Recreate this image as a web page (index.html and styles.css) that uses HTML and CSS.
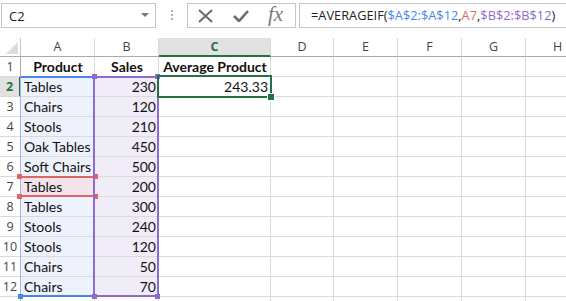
FILE: index.html
```html
<!DOCTYPE html>
<html lang="en">
<head>
  <meta charset="UTF-8">
  <title>AVERAGEIF</title>
  <link rel="stylesheet" href="styles.css">
</head>
<body>

  <div class="formula-bar">
    <div class="name-box">
      <span>C2</span>
      <span class="caret"></span>
    </div>
    <div class="grip"><i></i><i></i><i></i></div>
    <div class="fx-buttons">
      <svg class="icon-x" width="15" height="14" viewBox="0 0 15 14">
        <path d="M1 1 L14 13 M14 1 L1 13" stroke="#6b6b6b" stroke-width="2" fill="none"/>
      </svg>
      <svg class="icon-check" width="16" height="12" viewBox="0 0 16 12">
        <path d="M1 6 L6 11 L15 1" stroke="#6b6b6b" stroke-width="2.6" fill="none"/>
      </svg>
      <span class="fx">fx</span>
    </div>
    <div class="formula-input">=AVERAGEIF(<span class="ref-a">$A$2:$A$12</span>,<span class="ref-r">A7</span>,<span class="ref-b">$B$2:$B$12</span>)</div>
  </div>

  <div class="sheet-wrap">
    <div class="sheet">
      <div class="corner"></div>
      <div class="col-head">A</div><div class="col-head">B</div><div class="col-head active">C</div><div class="col-head">D</div><div class="col-head">E</div><div class="col-head">F</div><div class="col-head">G</div><div class="col-head">H</div>

      <div class="row-head">1</div>
      <div class="cell bold center">Product</div><div class="cell bold center">Sales</div><div class="cell bold center">Average Product</div><div class="cell"></div><div class="cell"></div><div class="cell"></div><div class="cell"></div><div class="cell"></div>

      <div class="row-head active">2</div>
      <div class="cell in-a">Tables</div><div class="cell in-b num">230</div><div class="cell num">243.33</div><div class="cell"></div><div class="cell"></div><div class="cell"></div><div class="cell"></div><div class="cell"></div>

      <div class="row-head">3</div>
      <div class="cell in-a">Chairs</div><div class="cell in-b num">120</div><div class="cell"></div><div class="cell"></div><div class="cell"></div><div class="cell"></div><div class="cell"></div><div class="cell"></div>

      <div class="row-head">4</div>
      <div class="cell in-a">Stools</div><div class="cell in-b num">210</div><div class="cell"></div><div class="cell"></div><div class="cell"></div><div class="cell"></div><div class="cell"></div><div class="cell"></div>

      <div class="row-head">5</div>
      <div class="cell in-a">Oak Tables</div><div class="cell in-b num">450</div><div class="cell"></div><div class="cell"></div><div class="cell"></div><div class="cell"></div><div class="cell"></div><div class="cell"></div>

      <div class="row-head">6</div>
      <div class="cell in-a">Soft Chairs</div><div class="cell in-b num">500</div><div class="cell"></div><div class="cell"></div><div class="cell"></div><div class="cell"></div><div class="cell"></div><div class="cell"></div>

      <div class="row-head">7</div>
      <div class="cell in-r">Tables</div><div class="cell in-b num">200</div><div class="cell"></div><div class="cell"></div><div class="cell"></div><div class="cell"></div><div class="cell"></div><div class="cell"></div>

      <div class="row-head">8</div>
      <div class="cell in-a">Tables</div><div class="cell in-b num">300</div><div class="cell"></div><div class="cell"></div><div class="cell"></div><div class="cell"></div><div class="cell"></div><div class="cell"></div>

      <div class="row-head">9</div>
      <div class="cell in-a">Stools</div><div class="cell in-b num">240</div><div class="cell"></div><div class="cell"></div><div class="cell"></div><div class="cell"></div><div class="cell"></div><div class="cell"></div>

      <div class="row-head">10</div>
      <div class="cell in-a">Stools</div><div class="cell in-b num">120</div><div class="cell"></div><div class="cell"></div><div class="cell"></div><div class="cell"></div><div class="cell"></div><div class="cell"></div>

      <div class="row-head">11</div>
      <div class="cell in-a">Chairs</div><div class="cell in-b num">50</div><div class="cell"></div><div class="cell"></div><div class="cell"></div><div class="cell"></div><div class="cell"></div><div class="cell"></div>

      <div class="row-head">12</div>
      <div class="cell in-a">Chairs</div><div class="cell in-b num">70</div><div class="cell"></div><div class="cell"></div><div class="cell"></div><div class="cell"></div><div class="cell"></div><div class="cell"></div>

      <div class="row-head"></div>
      <div class="cell"></div><div class="cell"></div><div class="cell"></div><div class="cell"></div><div class="cell"></div><div class="cell"></div><div class="cell"></div><div class="cell"></div>
    </div>

    <!-- range highlights drawn over the grid -->
    <div class="range range-a"><b class="sq tl"></b><b class="sq bl"></b></div>
    <div class="range range-r"><b class="sq tl"></b><b class="sq tr"></b><b class="sq bl"></b><b class="sq br"></b></div>
    <div class="range range-b"><b class="sq tl"></b><b class="sq tr"></b><b class="sq bl"></b><b class="sq br"></b></div>
    <div class="selection"><b class="handle"></b></div>
  </div>

</body>
</html>
```

FILE: styles.css
```css
body {
  margin: 0;
  background: #fff;
  font-family: Lato, "Liberation Sans", sans-serif;
  overflow: hidden;
  width: 566px;
  height: 301px;
}

/* formula bar */
.formula-bar {
  display: flex;
  align-items: flex-start;
  height: 38px;
  padding: 3px 0 0 1px;
  box-sizing: border-box;
}

.name-box {
  width: 155px;
  height: 25px;
  box-sizing: border-box;
  border: 1px solid #c6c6c6;
  display: flex;
  align-items: center;
  justify-content: space-between;
  padding: 0 6px 0 7px;
  font-family: "Open Sans", sans-serif;
  font-size: 13px;
  color: #222;
}

.caret {
  width: 0;
  height: 0;
  border-left: 4px solid transparent;
  border-right: 4px solid transparent;
  border-top: 4px solid #777;
  margin-top: -2px;
}

.grip {
  width: 31px;
  display: flex;
  flex-direction: column;
  align-items: center;
  gap: 2px;
  padding-top: 7px;
}

.grip i {
  width: 2px;
  height: 2px;
  background: #b0b0b0;
}

.fx-buttons {
  width: 109px;
  height: 25px;
  box-sizing: border-box;
  border: 1px solid #c6c6c6;
  display: flex;
  align-items: center;
  padding-left: 10px;
}

.icon-x {
  margin-top: 1px;
}

.icon-check {
  margin-left: 20px;
  margin-top: 1px;
}

.fx {
  margin-left: 19px;
  font-family: "Liberation Serif", serif;
  font-style: italic;
  font-size: 21px;
  color: #7a7a7a;
  margin-top: -3px;
}

.formula-input {
  margin-left: 3px;
  flex: 1;
  height: 25px;
  box-sizing: border-box;
  border: 1px solid #c6c6c6;
  border-right: none;
  padding: 0 0 0 11px;
  line-height: 23px;
  font-family: "Open Sans", sans-serif;
  font-size: 12.8px;
  color: #222;
  white-space: nowrap;
}

.ref-a { color: #4a86e8; }
.ref-r { color: #e06666; }
.ref-b { color: #8e6cc9; }

/* grid */
.sheet-wrap {
  position: relative;
}

.sheet {
  display: grid;
  grid-template-columns: 21px 74px 64px 112px 63px 64px 64px 64px 64px;
  grid-template-rows: 19px;
  grid-auto-rows: 20px;
  font-size: 14px;
  color: #111;
}

.sheet > div {
  box-sizing: border-box;
  border-right: 1px solid #dadada;
  border-bottom: 1px solid #dadada;
  white-space: nowrap;
  overflow: hidden;
}

.corner {
  position: relative;
  border-right-color: #c3c3c3 !important;
  border-bottom-color: #ababab !important;
}

.corner::after {
  content: "";
  position: absolute;
  right: 2px;
  bottom: 2px;
  border-left: 12px solid transparent;
  border-bottom: 12px solid #dcdcdc;
}

.col-head {
  text-align: center;
  font-family: "Open Sans", sans-serif;
  font-size: 12.5px;
  line-height: 18px;
  color: #444;
  border-bottom-color: #ababab !important;
}

.col-head.active {
  background: #e1e1e1;
  color: #217346;
  font-weight: bold;
  border-bottom: 2px solid #217346 !important;
}

.row-head {
  text-align: center;
  font-family: "Open Sans", sans-serif;
  font-size: 12.5px;
  line-height: 19px;
  color: #444;
  border-right-color: #ababab !important;
}

.row-head.active {
  background: #e1e1e1;
  color: #217346;
  font-weight: bold;
  border-right: 2px solid #217346 !important;
}

.cell {
  line-height: 20px;
  padding: 0 2px 0 3px;
}

.bold { font-weight: bold; }
.center { text-align: center; }
.num { text-align: right; }

.in-a { background: #edf2fc; }
.in-b { background: #f1edf8; }
.in-r { background: #f3e3ea; }

/* range outlines */
.range {
  position: absolute;
  box-sizing: border-box;
}

.range-a {
  left: 20px;
  top: 38px;
  width: 75px;
  height: 221px;
  border-top: 2px solid #4a86e8;
  border-bottom: 2px solid #4a86e8;
  border-left: 1px solid #9db8ec;
}

.range-r {
  left: 20px;
  top: 138px;
  width: 75px;
  height: 21px;
  border-top: 2px solid #e06666;
  border-bottom: 2px solid #e06666;
}

.range-b {
  left: 93px;
  top: 38px;
  width: 66px;
  height: 221px;
  border: 2px solid #8e6cc9;
}

.sq {
  position: absolute;
  width: 5px;
  height: 5px;
}

.range-a .sq { background: #4a86e8; }
.range-r .sq { background: #e06666; }
.range-b .sq { background: #8e6cc9; }

.sq.tl { left: -3px; top: -4px; }
.sq.tr { right: -3px; top: -4px; }
.sq.bl { left: -3px; bottom: -4px; }
.sq.br { right: -3px; bottom: -4px; }

.range-a .sq.tl { display: none; }

.selection {
  position: absolute;
  left: 157px;
  top: 37px;
  width: 115px;
  height: 23px;
  box-sizing: border-box;
  border: 2px solid #217346;
}

.handle {
  position: absolute;
  right: -5px;
  bottom: -5px;
  width: 6px;
  height: 6px;
  background: #217346;
  border: 1px solid #fff;
}
```
